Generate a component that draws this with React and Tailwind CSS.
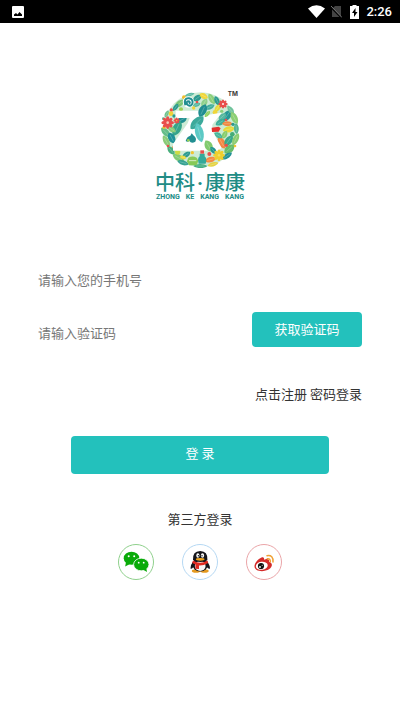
import React, { useState } from "react";

// [x, y, half length, half width, angle, colour]
const ringLeaves = [
  [62, 46, 18, 8, -38, "#7cc576"],
  [50, 58, 13, 6, -55, "#2b9a8f"],
  [92, 20, 15, 5, -15, "#57b8a0"],
  [115, 30, 15, 8, -35, "#2b9a8f"],
  [113, 50, 12, 6, -20, "#57b8a0"],
  [134, 24, 14, 8, 25, "#f0d63a"],
  [136, 44, 14, 8, -60, "#8fd08a"],
  [158, 33, 18, 8, 60, "#8ccf7a"],
  [174, 38, 15, 7, 65, "#2b9a8f"],
  [152, 57, 16, 7, -25, "#42ae9c"],
  [176, 60, 14, 7, -55, "#e8d83b"],
  [69, 95, 16, 9, -28, "#208f91"],
  [23, 78, 12, 5, -65, "#6cc08b"],
  [54, 121, 25, 12, -65, "#36a58a"],
  [38, 124, 14, 7, 30, "#8acb78"],
  [20, 133, 19, 9, 45, "#65bd88"],
  [38, 150, 18, 10, 62, "#1f9298"],
  [22, 160, 20, 8, 60, "#8acb78"],
  [49, 178, 13, 8, -55, "#f1863c"],
  [36, 187, 16, 8, 50, "#49ae7c"],
  [58, 209, 19, 9, 28, "#82ca73"],
  [72, 224, 18, 7, 15, "#36a292"],
  [82, 200, 14, 7, -35, "#2b9a8f"],
  [72, 208, 10, 5, 10, "#e8d83b"],
  [124, 234, 21, 6, 0, "#44ae83"],
  [154, 215, 17, 8, -15, "#f58a42"],
  [162, 229, 17, 6, -16, "#e4d342"],
  [188, 164, 20, 10, 60, "#f28843"],
  [209, 158, 19, 10, -55, "#38a88b"],
  [211, 183, 19, 11, -42, "#67bd6c"],
  [204, 204, 18, 7, -35, "#239294"],
  [230, 154, 20, 8, -65, "#8bcc72"],
  [204, 83, 20, 11, -55, "#269795"],
  [215, 66, 15, 7, 50, "#70c39c"],
  [226, 90, 20, 9, 62, "#8ccf74"],
  [190, 86, 14, 8, -42, "#57b8a0"],
  [184, 103, 16, 8, -30, "#3caf9a"],
  [205, 107, 16, 7, 0, "#f08942"],
  [209, 124, 18, 9, -12, "#e7da3a"],
  [232, 122, 16, 7, 85, "#55b690"],
  [178, 142, 14, 7, 30, "#47b69b"],
  [197, 140, 13, 7, -65, "#86cc6c"],
];

// the ones lying between and over the strokes of the letters
const innerLeaves = [
  [131, 68, 21, 11, -65, "#218e91"],
  [145, 78, 12, 5, -50, "#8fd05e"],
  [114, 104, 27, 13, -45, "#3ba99b"],
  [121, 134, 30, 12, 75, "#5cc9c5"],
  [149, 174, 19, 11, 60, "#80ca6e"],
  [163, 187, 13, 7, 50, "#239590"],
];

// [x, y, radius, colour]
const dots = [
  [75, 28, 6, "#efbd2e"],
  [66, 64, 6, "#9ad154"],
  [104, 60, 5, "#f2d338"],
  [114, 42, 4, "#e94e4c"],
  [37, 66, 5, "#e94e4c"],
  [36, 77, 7, "#f1d338"],
  [13, 92, 4, "#55b690"],
  [15, 118, 5, "#f0c531"],
  [45, 84, 5, "#2b9a8f"],
  [121, 88, 7, "#d8dc36"],
  [168, 73, 7, "#f0d63a"],
  [27, 174, 4, "#e94e4c"],
  [56, 192, 8, "#cddb45"],
  [100, 194, 5, "#f0c531"],
  [151, 198, 6, "#e94e4c"],
  [137, 176, 5, "#e94e4c"],
  [202, 172, 5, "#e94e4c"],
  [228, 174, 4, "#f0c531"],
  [201, 96, 4, "#e94e4c"],
  [222, 109, 5, "#2b9a8f"],
  [220, 139, 7, "#45ac77"],
  [188, 70, 5, "#8ccf7a"],
];

const petals = [0, 45, 90, 135, 180, 225, 270, 315];

function Leaf({ leaf }) {
  const [x, y, l, w, a, color] = leaf;
  return (
    <g transform={`translate(${x} ${y}) rotate(${a})`}>
      <path
        d={`M${-l} 0C${-l * 0.6} ${-w * 1.4} ${l * 0.5} ${-w * 1.4} ${l} 0C${l * 0.6} ${w * 1.4} ${-l * 0.5} ${w * 1.4} ${-l} 0`}
        fill={color}
      />
      <path d={`M${-l * 0.6} 0H${l * 0.6}`} stroke="#fff" strokeOpacity=".4" strokeWidth="1.500" />
    </g>
  );
}

function Flower({ x, y, r, color, center }) {
  return (
    <g transform={`translate(${x} ${y})`}>
      {petals.map((a) => (
        <ellipse key={a} cx={r * 0.65} rx={r * 0.4} ry={r * 0.27} fill={color} transform={`rotate(${a})`} />
      ))}
      <circle r={r * 0.65} fill={color} />
      <circle r={r * 0.22} fill={center} />
    </g>
  );
}

function LogoMark() {
  return (
    <svg className="h-[82px] w-[82px]" viewBox="0 0 246 246" aria-hidden="true">
      <circle cx="125" cy="125" r="112" fill="#cdebd5" />
      {ringLeaves.map((leaf) => (
        <Leaf key={`${leaf[0]}-${leaf[1]}`} leaf={leaf} />
      ))}
      {dots.map(([x, y, r, color]) => (
        <circle key={`${x}-${y}`} cx={x} cy={y} r={r} fill={color} />
      ))}
      <path d="M50 68H120L148 80L188 74L160 110V128L188 180L176 188H42V168L86 106L92 90H50z" fill="#fff" />
      {innerLeaves.map((leaf) => (
        <Leaf key={`${leaf[0]}-${leaf[1]}`} leaf={leaf} />
      ))}
      <circle cx="88" cy="42" r="17" fill="#fff" />
      <path
        d="M79 52Q73 29 90 31Q104 34 100 47Q93 58 85 50Q79 40 90 40Q95 43 90 47"
        fill="none"
        stroke="#218e91"
        strokeWidth="6"
      />
      <Flower x={26} y={104} r={18} color="#e94e4c" center="#f9c8b8" />
      <Flower x={53} y={98} r={9} color="#e94e4c" center="#f5d13a" />
      <Flower x={192} y={48} r={13} color="#e94e4c" center="#fff" />
      <Flower x={180} y={202} r={17} color="#efcf2e" center="#f5e05c" />
      <path d="M158 119l21-3 6 5-6 10-20 1z" fill="#e4312f" />
      <path d="M80 159q3-13 14-16l4-7 5 6q12 8 6 19-12 7-18-2-6 4-11 0z" fill="#218e91" />
      <circle cx="88" cy="157" r="4" fill="#9ad154" />
      <path d="M88 209q13-7 25 0l5 9-5 14H90l-6-12z" fill="#87c957" />
      <path d="M90 218h22" stroke="#fff" strokeWidth="2" />
      <path d="M122 197h15v8q7 5 5 14l-2 8h-21l-2-11q0-7 5-11z" fill="#35a99a" />
      <path d="M124 187h11v10h-11z" fill="#e94e4c" />
      <text x="206" y="24" fontFamily="Inter, sans-serif" fontSize="19" fontWeight="700" fill="#3b3838">
        TM
      </text>
    </svg>
  );
}

function Brand() {
  return (
    <div className="flex flex-col items-center pt-[65px]">
      <LogoMark />
      <h1 className="mt-0.5 font-['Noto_Sans_CJK_SC',sans-serif] text-[20px] font-medium leading-5 text-[#218c85]">
        中科<span className="inline-block w-2.5 text-center font-[Roboto,sans-serif] font-bold">·</span>康康
      </h1>
      <p className="flex w-[88px] justify-between font-[Roboto,sans-serif] text-[7px] font-bold leading-2 text-[#218c85]">
        <span>ZHONG</span>
        <span>KE</span>
        <span>KANG</span>
        <span>KANG</span>
      </p>
    </div>
  );
}

function StatusBar() {
  return (
    <div className="flex h-[23px] items-center justify-between bg-black px-2 text-white">
      <svg className="ml-1 h-3 w-3" viewBox="0 0 12 12">
        <rect width="12" height="12" rx="1" fill="#fff" />
        <path d="M2 10V8.500L4 7l1.500 1.500L7.500 6 10 8.500V10z" fill="#000" />
      </svg>
      <div className="flex items-center">
        <svg className="h-[13px] w-[17px]" viewBox="0 0 17 13">
          <path d="M0 3.500Q8.500-3 17 3.500L8.500 13z" fill="#fff" />
        </svg>
        <svg className="ml-1.5 h-[13px] w-[11px]" viewBox="0 0 11 13">
          <path d="M4 1h6v11H1V4z" fill="#444" />
          <path d="M0 2.500l11 11" stroke="#000" strokeWidth="1.500" />
          <path d="M0 1l11 11.500" stroke="#777" />
        </svg>
        <svg className="ml-2 h-[14px] w-[9px]" viewBox="0 0 9 14">
          <path d="M2.500 0h4v1H9v13H0V1h2.500z" fill="#fff" />
          <path d="M5.500 3L2 8h2v4l3.500-5h-2z" fill="#000" />
        </svg>
        <span className="ml-[7px] font-[Roboto,sans-serif] text-[13px] font-medium leading-none">2:26</span>
      </div>
    </div>
  );
}

function WechatIcon() {
  return (
    <svg className="h-9 w-9" viewBox="0 0 36 36">
      <circle cx="18" cy="18" r="17.500" fill="#fff" stroke="#8fd08c" />
      <ellipse cx="13.500" cy="14.200" rx="7.800" ry="6.500" fill="#09ab09" />
      <path d="M8 18l-.8 4.500 4.800-2.500z" fill="#09ab09" />
      <ellipse cx="23.300" cy="20.500" rx="7.700" ry="6.300" fill="#09ab09" stroke="#fff" strokeWidth=".8" />
      <path d="M25 25.500l4 2.500-.8-4z" fill="#09ab09" />
      <g fill="#fff">
        <circle cx="10.700" cy="12.200" r="1" />
        <circle cx="16.200" cy="12.200" r="1" />
        <circle cx="20.700" cy="18.700" r=".9" />
        <circle cx="25.700" cy="18.700" r=".9" />
      </g>
    </svg>
  );
}

function QQIcon() {
  return (
    <svg className="h-9 w-9" viewBox="0 0 36 36">
      <circle cx="18" cy="18" r="17.500" fill="#fff" stroke="#b5d8f3" />
      <path d="M11.500 17q-3 3.500-3 7.500 1.500 1 3-2zM24.500 17q3.500 3.500 3.500 7.500-1.500 1-3.500-2z" fill="#15151a" />
      <ellipse cx="14" cy="27" rx="4.200" ry="1.800" fill="#e59a20" />
      <ellipse cx="22.500" cy="27" rx="4.200" ry="1.800" fill="#e59a20" />
      <ellipse cx="18.200" cy="20.500" rx="7.800" ry="7" fill="#15151a" />
      <ellipse cx="18.200" cy="22" rx="5.400" ry="5" fill="#f5f5f5" />
      <path d="M11 16q-.6-8.800 7.200-9 7.800.2 7.200 9-6.700 4-14.400 0z" fill="#15151a" />
      <ellipse cx="15.900" cy="11.500" rx="1.600" ry="2.200" fill="#fff" />
      <ellipse cx="20.500" cy="11.500" rx="1.600" ry="2.200" fill="#fff" />
      <circle cx="16.400" cy="11.700" r=".7" fill="#111" />
      <circle cx="20" cy="11.700" r=".7" fill="#111" />
      <ellipse cx="18.200" cy="15.300" rx="4.400" ry="1.400" fill="#efa51e" />
      <path d="M11 16.500q7.200 4.500 14.400 0l.8 2.500q-5 2.800-9.200 2.500v3.500l-3.700-.2.200-4.200-3.300-1.600z" fill="#e02a20" />
    </svg>
  );
}

function WeiboIcon() {
  return (
    <svg className="h-9 w-9" viewBox="0 0 36 36">
      <circle cx="18" cy="18" r="17.500" fill="#fff" stroke="#eaa5a8" />
      <path
        d="M15.500 13.500c1.800-.8 3 0 2.500 2.200 3-1.400 5.800-.8 5 2 5 1.800 3 6.300-1.500 8.300-6 2.600-13 .6-13-3.800 0-3.200 3.600-7.200 7-8.700z"
        fill="#d52b2a"
      />
      <ellipse cx="15.800" cy="21.800" rx="6" ry="4" fill="#fff" transform="rotate(-8 15.800 21.800)" />
      <circle cx="15" cy="22" r="3.100" fill="#111" />
      <circle cx="14" cy="23" r=".9" fill="#fff" />
      <circle cx="16.200" cy="21.300" r=".5" fill="#fff" />
      <path d="M21 11.700q6.500-1 6 6.300M21.300 14.700q3.200-.4 3 3" fill="none" stroke="#f0a033" strokeWidth="1.500" strokeLinecap="round" />
    </svg>
  );
}

export default function App() {
  const [phone, setPhone] = useState("");
  const [code, setCode] = useState("");

  return (
    <div className="min-h-screen bg-white font-['Noto_Sans_CJK_SC',sans-serif] text-[13px] leading-5 text-[#333]">
      <StatusBar />
      <main>
        <Brand />
        <form className="px-[38px] pt-[58px]" onSubmit={(e) => e.preventDefault()}>
          <input
            type="tel"
            aria-label="手机号"
            placeholder="请输入您的手机号"
            value={phone}
            onChange={(e) => setPhone(e.target.value)}
            className="block h-10 w-full outline-none placeholder:text-[#777]"
          />
          <div className="mt-[13px] flex items-start justify-between gap-4">
            <input
              type="text"
              aria-label="验证码"
              placeholder="请输入验证码"
              value={code}
              onChange={(e) => setCode(e.target.value)}
              className="h-10 min-w-0 flex-1 outline-none placeholder:text-[#777]"
            />
            <button type="button" className="h-[35px] w-[110px] rounded-[4px] bg-[#23c1bc] pb-0.5 text-white">
              获取验证码
            </button>
          </div>
          <div className="mt-8 flex justify-end gap-[3px]">
            <a href="#register">点击注册</a>
            <a href="#password">密码登录</a>
          </div>
          <div className="mt-8 px-[33px]">
            <button type="submit" className="h-[38px] w-full rounded-[4px] bg-[#23c1bc] pb-1 text-white">
              登 录
            </button>
          </div>
        </form>
        <section className="flex flex-col items-center pt-[35px]">
          <h2>第三方登录</h2>
          <div className="mt-[15px] flex gap-7">
            <button type="button" aria-label="微信登录">
              <WechatIcon />
            </button>
            <button type="button" aria-label="QQ登录">
              <QQIcon />
            </button>
            <button type="button" aria-label="微博登录">
              <WeiboIcon />
            </button>
          </div>
        </section>
      </main>
    </div>
  );
}
